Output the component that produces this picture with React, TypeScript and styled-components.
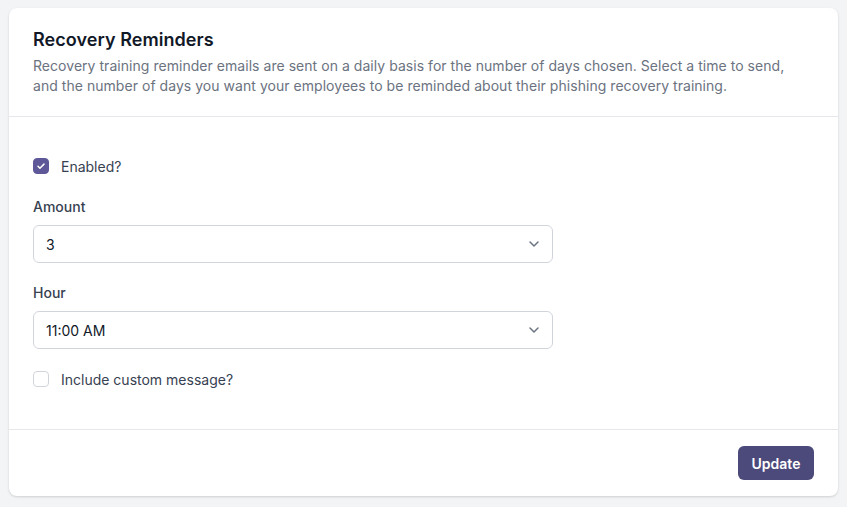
import React, { useState } from "react";
import styled, { createGlobalStyle } from "styled-components";

const GlobalStyle = createGlobalStyle`
  * { box-sizing: border-box; }
  body {
    margin: 0;
    padding: 8px 9px;
    background: #f3f4f6;
    font-family: Inter, "Noto Sans", sans-serif;
    -webkit-font-smoothing: antialiased;
  }
`;

const Card = styled.section`
  background: #fff;
  border-radius: 8px;
  box-shadow: 0 1px 3px rgba(0, 0, 0, 0.1), 0 1px 2px rgba(0, 0, 0, 0.06);
  overflow: hidden;
`;

const Header = styled.header`
  padding: 18px 24px 20px;
  border-bottom: 1px solid #e5e7eb;
`;

const Title = styled.h2`
  margin: 0 0 2px;
  font-size: 18px;
  line-height: 28px;
  font-weight: 600;
  color: #111827;
  letter-spacing: 0.05px;
`;

const Description = styled.p`
  margin: 0;
  max-width: 760px;
  font-size: 14px;
  line-height: 20px;
  color: #6b7280;
  letter-spacing: 0.04px;
`;

const Body = styled.div`
  padding: 39px 24px 40px;
  display: flex;
  flex-direction: column;
  gap: 20px;
`;

const CheckRow = styled.label`
  display: flex;
  align-items: center;
  gap: 12px;
  height: 20px;
  font-size: 14px;
  color: #374151;
  cursor: pointer;
`;

const Box = styled.span<{ $checked: boolean }>`
  width: 16px;
  height: 16px;
  border-radius: 4px;
  border: 1px solid ${(p) => (p.$checked ? "#5f5898" : "#d1d5db")};
  background: ${(p) => (p.$checked ? "#5f5898" : "#fff")};
  display: flex;
  align-items: center;
  justify-content: center;
`;

const Field = styled.div<{ $first?: boolean }>`
  display: flex;
  flex-direction: column;
  gap: 8px;
  margin-top: ${(p) => (p.$first ? "1px" : "0")};
`;

const Label = styled.span`
  font-size: 14px;
  line-height: 20px;
  font-weight: 500;
  color: #374151;
`;

const SelectBox = styled.div`
  width: 520px;
  height: 38px;
  border: 1px solid #d1d5db;
  border-radius: 6px;
  padding: 0 12px;
  display: flex;
  align-items: center;
  justify-content: space-between;
  font-size: 14px;
  color: #111827;
  background: #fff;
`;

const ChevronWrap = styled.span`
  display: flex;
  margin-right: -4px;
`;

const Footer = styled.footer`
  border-top: 1px solid #e5e7eb;
  padding: 16px 24px;
  display: flex;
  justify-content: flex-end;
`;

const Button = styled.button`
  height: 34px;
  width: 76px;
  padding: 0;
  border: none;
  border-radius: 6px;
  background: #4c497b;
  color: #fff;
  font-family: inherit;
  font-size: 14px;
  font-weight: 600;
  cursor: pointer;
`;

const Check = ({ checked, label, onToggle }: { checked: boolean; label: string; onToggle: () => void }) => (
  <CheckRow onClick={onToggle}>
    <Box $checked={checked}>
      {checked && (
        <svg width="12" height="12" viewBox="0 0 16 16" fill="none">
          <path d="M4 8.3l2.6 2.6L12 5.5" stroke="#fff" strokeWidth="2" strokeLinecap="round" strokeLinejoin="round" />
        </svg>
      )}
    </Box>
    {label}
  </CheckRow>
);

const Chevron = () => (
  <svg width="20" height="20" viewBox="0 0 20 20" fill="none">
    <path d="M6 8l4 4 4-4" stroke="#6b7280" strokeWidth="1.5" strokeLinecap="round" strokeLinejoin="round" />
  </svg>
);

const Select = ({ value }: { value: string }) => (
  <SelectBox>
    <span>{value}</span>
    <ChevronWrap>
      <Chevron />
    </ChevronWrap>
  </SelectBox>
);

export default function App() {
  const [enabled, setEnabled] = useState(true);
  const [custom, setCustom] = useState(false);
  return (
    <>
      <GlobalStyle />
      <Card>
        <Header>
          <Title>Recovery Reminders</Title>
          <Description>
            Recovery training reminder emails are sent on a daily basis for the number of days chosen. Select a time
            to send, and the number of days you want your employees to be reminded about their phishing recovery
            training.
          </Description>
        </Header>
        <Body>
          <Check checked={enabled} label="Enabled?" onToggle={() => setEnabled(!enabled)} />
          <Field $first>
            <Label>Amount</Label>
            <Select value="3" />
          </Field>
          <Field>
            <Label>Hour</Label>
            <Select value="11:00 AM" />
          </Field>
          <Check checked={custom} label="Include custom message?" onToggle={() => setCustom(!custom)} />
        </Body>
        <Footer>
          <Button>Update</Button>
        </Footer>
      </Card>
    </>
  );
}
